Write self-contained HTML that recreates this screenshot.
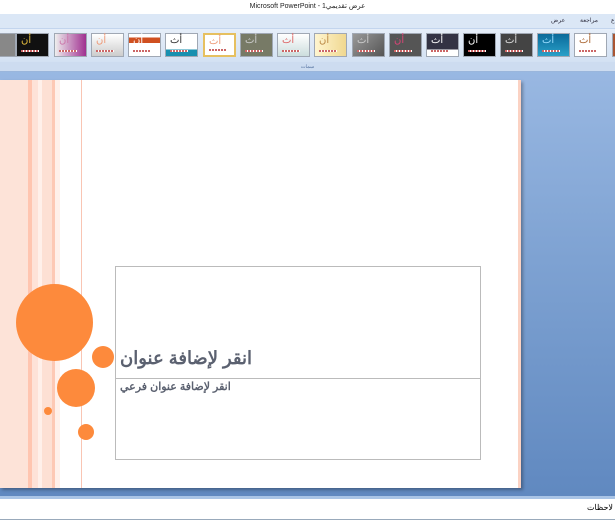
<!DOCTYPE html>
<html><head><meta charset="utf-8"><style>
*{margin:0;padding:0;box-sizing:border-box}
body{width:615px;height:520px;overflow:hidden;position:relative;font-family:"Liberation Sans","Noto Sans CJK SC",sans-serif;background:linear-gradient(#a3c0e8,#7ea2d2 50%,#5d86be)}
.abs{position:absolute}
.title{left:0;top:0;width:615px;height:14px;background:#fff;font-size:7px;text-align:center;line-height:14px;color:#222}
.tabs{left:0;top:14px;width:615px;height:14px;background:#dbe7f6;font-size:6px;color:#334}
.gal{left:0;top:28px;width:615px;height:34px;background:linear-gradient(#e6eef9,#d3e1f3);border-top:1px solid #c3d5ee}
.lbl{left:0;top:62px;width:615px;height:10px;background:#cddcf0;border-bottom:1px solid #9ab6dc;font-size:5px;text-align:center;color:#5573a0;line-height:10px}
.th{position:absolute;top:4px;width:33px;height:24px;border:1px solid #a0a8b4;font-size:10px;padding-left:4px;line-height:14px}
.th i{position:absolute;left:4px;bottom:4px;width:18px;height:2px;background:repeating-linear-gradient(90deg,#c66 0 2px,#fff 2px 3px)}
.slide{left:0;top:80px;width:521px;height:408px;background:#fff;border-right:3px solid #fbd2c3;box-shadow:2px 2px 3px rgba(0,0,0,.3)}
.c{position:absolute;border-radius:50%;background:#fd8a3c}
.notes{left:0;top:496px;width:615px;height:24px;background:#fff;border-top:3px solid #a9c4e6;border-bottom:1px solid #9ab;font-size:8px}
</style></head><body>
<div class="abs title">Microsoft PowerPoint - عرض تقديمي1</div>
<div class="abs tabs"><span class="abs" style="left:551px;top:3px">عرض</span><span class="abs" style="left:580px;top:3px">مراجعة</span><span class="abs" style="left:611px;top:3px">ع</span></div>
<div class="abs gal">
<div class="th" style="left:-17px;background:#888"></div>
<div class="th" style="left:16px;background:#111;color:#e8c040">أن<i></i></div>
<div class="th" style="left:54px;background:linear-gradient(90deg,#eee,#a03090);color:#c7a">أن<i></i></div>
<div class="th" style="left:91px;background:linear-gradient(#fff,#ccc);color:#e97">أن<i></i></div>
<div class="th" style="left:128px;background:linear-gradient(#fff 15%,#d05020 15% 40%,#fff 40%);color:#fff">أن<i></i></div>
<div class="th" style="left:165px;background:linear-gradient(#fff 70%,#1890b0 70%);color:#333">أث<i></i></div>
<div class="th" style="left:203px;background:#fff;border:2px solid #e6c060;color:#e97">أث<i></i></div>
<div class="th" style="left:240px;background:#777a66;color:#ccc">أث<i></i></div>
<div class="th" style="left:277px;background:linear-gradient(#fff,#cdd);color:#d66">أث<i></i></div>
<div class="th" style="left:314px;background:linear-gradient(90deg,#fff5d0,#f0d890);color:#b84">أن<i></i></div>
<div class="th" style="left:352px;background:linear-gradient(135deg,#999,#555);color:#ccc">أث<i></i></div>
<div class="th" style="left:389px;background:#555;color:#d47">أن<i></i></div>
<div class="th" style="left:426px;background:linear-gradient(#334 70%,#fff 70%);color:#fff">أث<i></i></div>
<div class="th" style="left:463px;background:#000;color:#fff">أن<i></i></div>
<div class="th" style="left:500px;background:#444;color:#ddd">أث<i></i></div>
<div class="th" style="left:537px;background:linear-gradient(#0a6a9a,#2aa0c8);color:#9df">أث<i></i></div>
<div class="th" style="left:574px;background:#fff;color:#a63">أث<i></i></div>
<div class="th" style="left:612px;background:#a53"></div>
</div>
<div class="abs lbl">سمات</div>
<div class="abs slide">
<div class="abs" style="left:0;top:0;width:82px;height:408px;background:linear-gradient(90deg,#fde3d8 0 28px,#ffc5b0 28px 32px,#fee2d8 32px 38px,#fff0ea 38px 42px,#fde0d4 42px 52px,#fdc9b5 52px 55px,#fff0ea 55px 60px,#fff 60px 81px,#f9c5b3 81px 82px)"></div>
<div class="c" style="left:16px;top:204px;width:77px;height:77px"></div>
<div class="c" style="left:92px;top:266px;width:22px;height:22px"></div>
<div class="c" style="left:57px;top:289px;width:38px;height:38px"></div>
<div class="c" style="left:44px;top:327px;width:8px;height:8px"></div>
<div class="c" style="left:78px;top:344px;width:16px;height:16px"></div>
<div class="abs" style="left:115px;top:186px;width:366px;height:113px;border:1px solid #bbb"></div>
<div class="abs" style="left:115px;top:298px;width:366px;height:82px;border:1px solid #bbb"></div>
<div class="abs" style="left:120px;top:268px;font-size:18px;font-weight:bold;color:#5b6170;direction:rtl">انقر لإضافة عنوان</div>
<div class="abs" style="left:120px;top:300px;font-size:11px;font-weight:bold;color:#5b6170;direction:rtl">انقر لإضافة عنوان فرعي</div>
</div>
<div class="abs notes"><span class="abs" style="right:2px;top:4px">لاحظات</span></div>
</body></html>
